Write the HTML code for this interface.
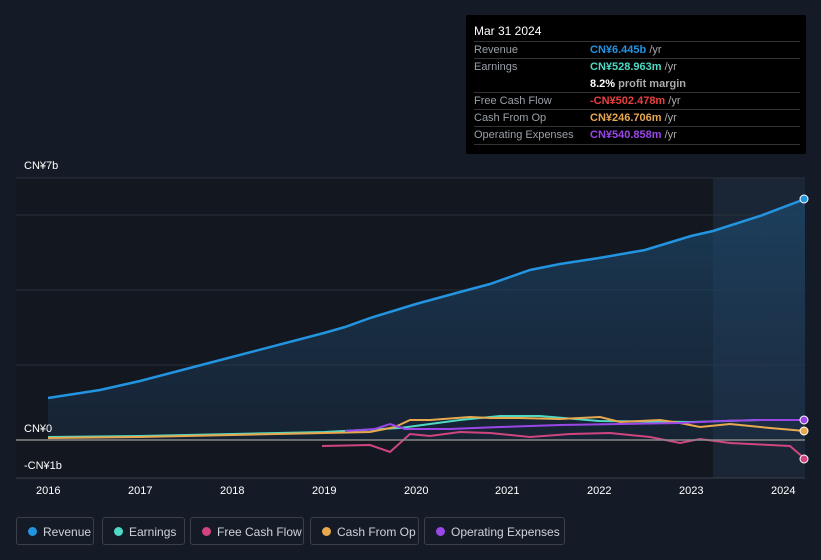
<!DOCTYPE html><html><head><style>
body{margin:0;width:821px;height:560px;background:#151b26;font-family:"Liberation Sans",sans-serif;overflow:hidden;position:relative}
.t{position:absolute;color:#fff;font-size:11px}
.tip{position:absolute;left:466px;top:15px;width:340px;height:139px;background:#000;border-radius:2px}
.row{position:absolute;left:8px;width:326px;font-size:11px;color:#9aa0a8;border-top:1px solid #333}
.row span{position:absolute;left:116px}
.lg{position:absolute;top:517px;height:28px;border:1px solid #3a3f48;border-radius:3px;color:#cfd3d8;font-size:12px;line-height:28px;box-sizing:border-box;padding-left:26px}
.lg i{position:absolute;left:11px;top:9px;width:9px;height:9px;border-radius:50%}
</style></head><body>
<svg width="821" height="560" style="position:absolute;left:0;top:0">
<defs><linearGradient id="g" x1="0" y1="0" x2="0" y2="1"><stop offset="0" stop-color="#1d4a6e" stop-opacity=".7"/><stop offset="1" stop-color="#1d3550" stop-opacity=".4"/></linearGradient></defs>
<rect x="16" y="178" width="789" height="300" fill="#121720"/>
<rect x="713" y="178" width="92" height="300" fill="#1a2636"/>
<line x1="16" y1="178" x2="805" y2="178" stroke="#2a303a"/>
<line x1="16" y1="215" x2="805" y2="215" stroke="#2a303a"/>
<line x1="16" y1="290" x2="805" y2="290" stroke="#2a303a"/>
<line x1="16" y1="365" x2="805" y2="365" stroke="#2a303a"/>
<path d="M48,398 L100,390 140,381 232,357 324,333 345,327 370,318 416,304 460,292 490,284 530,270 560,264 599,258 645,250 691,236 713,231 760,216 805,199 L805,440 48,440Z" fill="url(#g)"/>
<path d="M48,398 L100,390 140,381 232,357 324,333 345,327 370,318 416,304 460,292 490,284 530,270 560,264 599,258 645,250 691,236 713,231 760,216 805,199" fill="none" stroke="#2394e0" stroke-width="2.5"/>
<path d="M48,437 L140,436 232,434 324,432 400,428 460,420 500,416 540,416 599,421 691,422 760,420 805,420" fill="none" stroke="#4fd8c4" stroke-width="2"/>
<path d="M322,446 L370,445 390,452 410,434 430,436 460,432 490,433 530,437 570,434 610,433 650,437 680,443 700,439 730,443 770,445 790,446 805,459" fill="none" stroke="#d0457f" stroke-width="2"/>
<path d="M48,438 L140,437 232,435 324,433 370,432 395,427 410,420 430,420 470,417 490,418 520,418 560,419 600,417 620,422 660,420 680,423 700,427 730,424 770,428 805,431" fill="none" stroke="#e8a84f" stroke-width="2"/>
<path d="M345,431 L375,429 390,424 405,429 450,429 500,427 560,425 620,424 680,423 720,421 760,420 805,420" fill="none" stroke="#9b47e8" stroke-width="2"/>
<line x1="16" y1="440" x2="805" y2="440" stroke="#888" stroke-width="1.5"/>
<line x1="16" y1="478" x2="805" y2="478" stroke="#3a3f48"/>
<circle cx="804" cy="199" r="4" fill="#2394e0" stroke="#fff"/>
<circle cx="804" cy="420" r="4" fill="#9b47e8" stroke="#fff"/>
<circle cx="804" cy="431" r="4" fill="#e8a84f" stroke="#fff"/>
<circle cx="804" cy="459" r="4" fill="#d0457f" stroke="#fff"/>
</svg>
<div class="t" style="left:24px;top:160px">CN¥7b</div>
<div class="t" style="left:24px;top:423px">CN¥0</div>
<div class="t" style="left:24px;top:460px">-CN¥1b</div>
<div class="t" style="left:36px;top:485px">2016</div><div class="t" style="left:128px;top:485px">2017</div><div class="t" style="left:220px;top:485px">2018</div><div class="t" style="left:312px;top:485px">2019</div><div class="t" style="left:404px;top:485px">2020</div><div class="t" style="left:495px;top:485px">2021</div><div class="t" style="left:587px;top:485px">2022</div><div class="t" style="left:679px;top:485px">2023</div><div class="t" style="left:771px;top:485px">2024</div>
<div class="tip">
<div class="t" style="left:8px;top:9px;font-size:12px">Mar 31 2024</div>
<div class="row" style="top:26px;height:17px;line-height:17px">Revenue<span style="color:#2394e0;font-weight:bold">CN¥6.445b <b style="color:#aaa;font-weight:normal">/yr</b></span></div>
<div class="row" style="top:43px;height:34px;line-height:17px">Earnings<span style="color:#4fd8c4;font-weight:bold">CN¥528.963m <b style="color:#aaa;font-weight:normal">/yr</b><br><b style="color:#fff">8.2%</b> <b style="color:#aaa">profit margin</b></span></div>
<div class="row" style="top:77px;height:17px;line-height:17px">Free Cash Flow<span style="color:#e84040;font-weight:bold">-CN¥502.478m <b style="color:#aaa;font-weight:normal">/yr</b></span></div>
<div class="row" style="top:94px;height:17px;line-height:17px">Cash From Op<span style="color:#e8a84f;font-weight:bold">CN¥246.706m <b style="color:#aaa;font-weight:normal">/yr</b></span></div>
<div class="row" style="top:111px;height:17px;line-height:17px;border-bottom:1px solid #333">Operating Expenses<span style="color:#9b47e8;font-weight:bold">CN¥540.858m <b style="color:#aaa;font-weight:normal">/yr</b></span></div>
</div>
<div class="lg" style="left:16px;width:78px"><i style="background:#2394e0"></i>Revenue</div>
<div class="lg" style="left:102px;width:83px"><i style="background:#4fd8c4"></i>Earnings</div>
<div class="lg" style="left:190px;width:114px"><i style="background:#d0457f"></i>Free Cash Flow</div>
<div class="lg" style="left:310px;width:109px"><i style="background:#e8a84f"></i>Cash From Op</div>
<div class="lg" style="left:424px;width:141px"><i style="background:#9b47e8"></i>Operating Expenses</div>
</body></html>
